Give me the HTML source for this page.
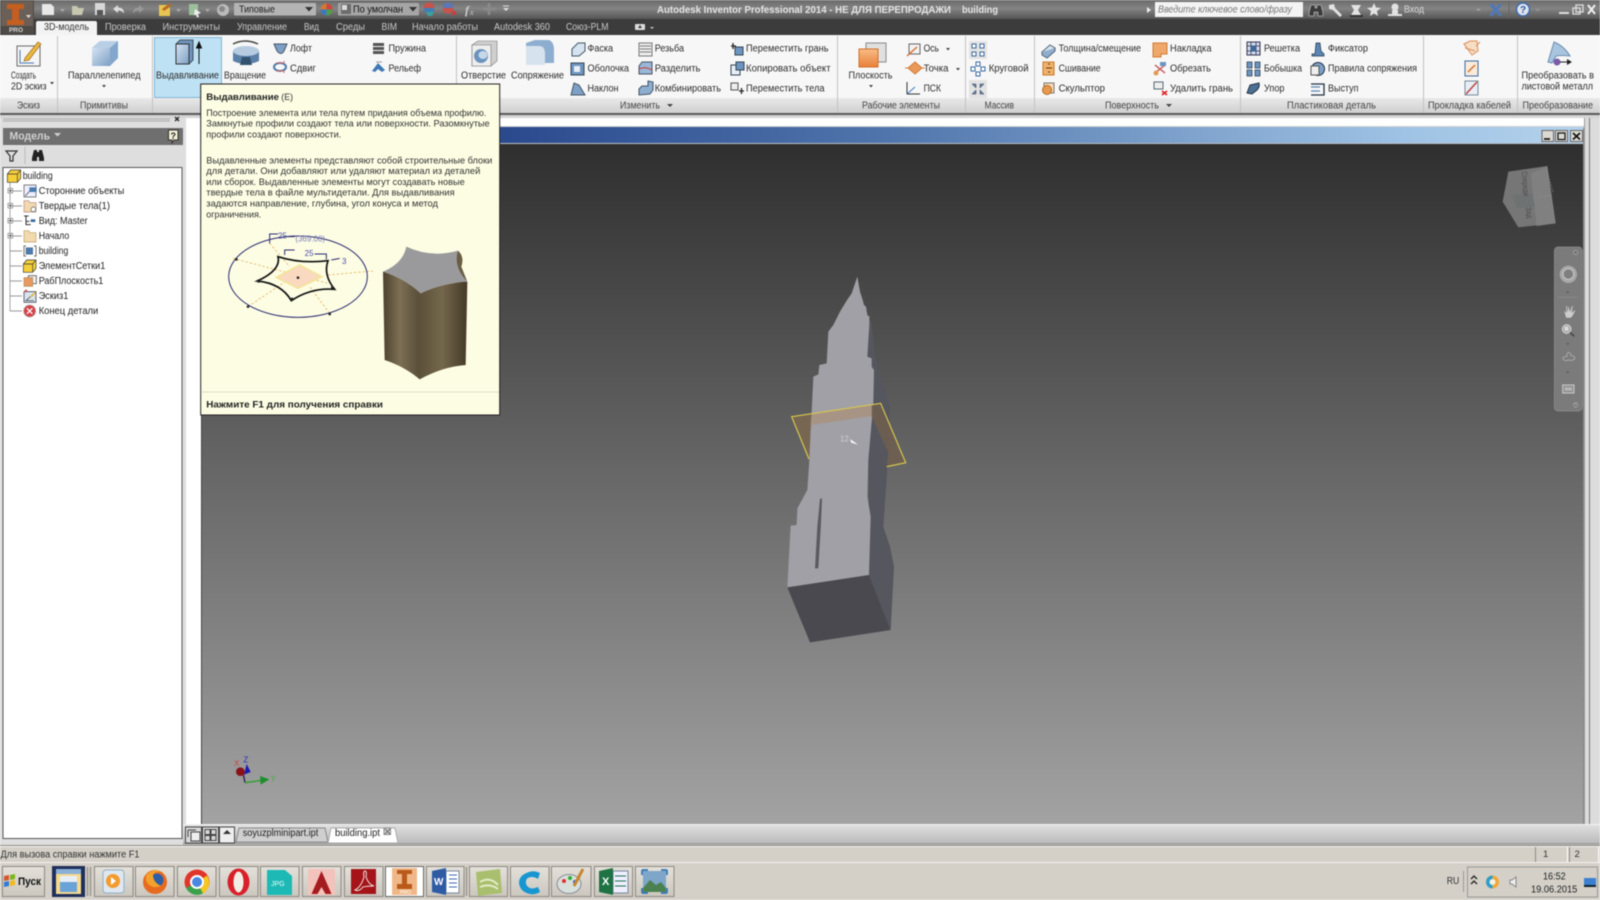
<!DOCTYPE html>
<html lang="ru"><head><meta charset="utf-8"><title>Autodesk Inventor</title>
<style>
html,body{margin:0;padding:0;background:#fff;width:1600px;height:900px;overflow:hidden}
svg{display:block;filter:blur(.4px);font-family:"Liberation Sans","Noto Sans CJK SC",sans-serif}
.r text{font-size:10px;fill:#2c2c2c}
.t text{font-size:10px;fill:#c8c8c8}
.l text{font-size:10px;fill:#444}
.tree text{font-size:10px;fill:#222}
.tip text{font-size:9.5px;fill:#333}
</style></head><body>
<svg width="1600" height="900" viewBox="0 0 1600 900" xmlns="http://www.w3.org/2000/svg">
<defs>
<linearGradient id="gT" x1="0" y1="0" x2="0" y2="1"><stop offset="0" stop-color="#6a6a6a"/><stop offset=".45" stop-color="#848484"/><stop offset="1" stop-color="#555"/></linearGradient>
<linearGradient id="gL" x1="0" y1="0" x2="0" y2="1"><stop offset="0" stop-color="#e9e9e9"/><stop offset="1" stop-color="#cfcfcf"/></linearGradient>
<linearGradient id="gV" x1="0" y1="0" x2="0" y2="1"><stop offset="0" stop-color="#2f2f2f"/><stop offset="1" stop-color="#a3a3a3"/></linearGradient>
<linearGradient id="gB" x1="0" y1="0" x2="1" y2="0"><stop offset="0" stop-color="#24408a"/><stop offset=".22" stop-color="#2b4a8e"/><stop offset=".49" stop-color="#4f74ab"/><stop offset=".87" stop-color="#9fc3e4"/><stop offset="1" stop-color="#b4d2ec"/></linearGradient>
<linearGradient id="gBar" x1="0" y1="0" x2="0" y2="1"><stop offset="0" stop-color="#e2e2e2"/><stop offset="1" stop-color="#b8b8b8"/></linearGradient>
<linearGradient id="gBox" x1="0" y1="0" x2="1" y2="1"><stop offset="0" stop-color="#d5e3f2"/><stop offset="1" stop-color="#7e9fc5"/></linearGradient>
<linearGradient id="gBr" x1="0" y1="0" x2="1" y2="0"><stop offset="0" stop-color="#4c422e"/><stop offset=".2" stop-color="#7d6f54"/><stop offset=".42" stop-color="#5a4f39"/><stop offset=".7" stop-color="#74674c"/><stop offset="1" stop-color="#443a28"/></linearGradient>
<linearGradient id="gOr" x1="0" y1="0" x2="0" y2="1"><stop offset="0" stop-color="#f8bd85"/><stop offset="1" stop-color="#e8803a"/></linearGradient>
<linearGradient id="gBtn" x1="0" y1="0" x2="0" y2="1"><stop offset="0" stop-color="#e4e1da"/><stop offset="1" stop-color="#cbc7bf"/></linearGradient>
</defs>

<!-- base -->
<rect width="1600" height="900" fill="#fff"/>
<!-- title -->
<rect width="1600" height="19" fill="url(#gT)"/>
<rect y="19" width="1600" height="16" fill="#3c3c3c"/>
<!-- app button -->
<rect width="34" height="34" fill="#4e4a46"/>
<rect x="1" y="1" width="32" height="25" fill="#6a6058"/>
<path d="M7 4h17v5h-5v11h5v5H7v-5h5V9H7z" fill="#c55f1f"/>
<path d="M26 15l5 0-2.500 3z" fill="#ddd"/>
<text x="9" y="32" font-size="6.500" font-weight="bold" fill="#d8d8d8" textLength="14" lengthAdjust="spacingAndGlyphs">PRO</text>
<!-- quick access -->
<g fill="#d5d5d5">
<path d="M42 4h9l3 3v8H42z" fill="#e8e8e8"/>
<path d="M60 9h5l-2.500 3z" fill="#aaa"/>
<path d="M72 6h5l1 2h6l-2 7H72z" fill="#c7c7b0"/>
<rect x="95" y="3" width="10" height="12" fill="#d8d8d8"/><rect x="97" y="10" width="6" height="5" fill="#555"/>
<path d="M113 9l5-4v2.500c4 0 6 2 6 6-1.500-2-3-3-6-3V13z" fill="#ddd"/>
<path d="M144 9l-5-4v2.500c-4 0-6 2-6 6 1.500-2 3-3 6-3V13z" fill="#999"/>
<path d="M159 5h9l2 3v8h-11z" fill="#e8c552"/><path d="M162 9l8-6 1 3-7 5z" fill="#b76a25"/>
<path d="M176 9h5l-2.500 3z" fill="#aaa"/>
<rect x="189" y="4" width="9" height="11" fill="#9cc09c"/><path d="M195 9l6 4-3 1 1 3-2 .5-1-3-2 1z" fill="#eee"/>
<path d="M205 9h5l-2.500 3z" fill="#aaa"/>
<circle cx="223" cy="10" r="6" fill="#bbb"/><circle cx="222" cy="9" r="3" fill="#888"/>
</g>
<rect x="234" y="3" width="82" height="12.500" rx="1" fill="#b4b4b4"/>
<text x="239" y="12.500" font-size="10" fill="#222" textLength="36" lengthAdjust="spacingAndGlyphs">Типовые</text>
<path d="M305 7h8l-4 4.500z" fill="#333"/>
<circle cx="326.500" cy="9.500" r="6" fill="#d07a34"/><path d="M326.500 3.500a6 6 0 0 1 6 6h-6z" fill="#c44"/><path d="M326.500 9.500h6a6 6 0 0 1-6 6z" fill="#4aa04a"/><path d="M326.500 9.500v6a6 6 0 0 1-6-6z" fill="#3c78c0"/>
<rect x="338" y="3" width="81" height="12.500" rx="1" fill="#a6a6a6"/>
<rect x="341" y="4" width="10" height="10" fill="#6b6b6b"/><rect x="342" y="5" width="5" height="5" fill="#ddd"/>
<text x="353" y="12.500" font-size="10" fill="#111" textLength="50" lengthAdjust="spacingAndGlyphs">По умолчан</text>
<path d="M409 7h8l-4 4.500z" fill="#333"/>
<circle cx="429" cy="8" r="5.500" fill="#c9534a"/><path d="M423.500 8h11a5.500 5.500 0 0 1-11 0z" fill="#3f7fb8"/><path d="M426 12h8l-2 4h-4z" fill="#3ca0a0"/>
<circle cx="448" cy="8" r="5.500" fill="#5b78b8"/><path d="M442.500 8h11a5.500 5.500 0 0 1-11 0z" fill="#c9534a"/><path d="M452 11l4 4m0-4l-4 4" stroke="#d33" stroke-width="1.500"/>
<text x="465" y="14" font-family="Liberation Serif" font-style="italic" font-weight="bold" font-size="12" fill="#ccc">f</text><text x="470" y="15" font-family="Liberation Serif" font-style="italic" font-size="8" fill="#ccc">x</text>
<path d="M489 3v12M483 9h13" stroke="#8a8a8a" stroke-width="2.500" fill="none"/>
<path d="M503 6h6" fill="none" stroke="#ddd"/><path d="M503 8h6l-3 3z" fill="#ddd"/>

<text x="657" y="13" font-size="10.500" font-weight="bold" fill="#e4e4e4" textLength="294" lengthAdjust="spacingAndGlyphs">Autodesk Inventor Professional 2014 - НЕ ДЛЯ ПЕРЕПРОДАЖИ</text>
<text x="962" y="13" font-size="10.500" font-weight="bold" fill="#e4e4e4" textLength="36" lengthAdjust="spacingAndGlyphs">building</text>

<!-- search & right -->
<path d="M1147 7l4 3-4 3z" fill="#eee"/>
<rect x="1155" y="2" width="148" height="15" fill="#f4f4f4"/>
<text x="1158" y="12.500" font-size="10" font-style="italic" fill="#777" textLength="134" lengthAdjust="spacingAndGlyphs">Введите ключевое слово/фразу</text>
<g fill="#e2e2e2">
<path d="M1311 5h4v3h2V5h4l2 8v3h-5v-4h-4v4h-5v-3z" fill="#3a3a3a" stroke="#ddd" stroke-width=".5"/>
<path d="M1329 5l5-1 1 4 7 7-2 2-7-7-4-1z"/>
<path d="M1351 5h10l-3 5 3 5h-10l3-5z"/><path d="M1350 15h13v2h-13z" fill="#333"/>
<path d="M1374 3l2 4.500 5 .5-4 3 1 5-4-2.500-4 2.500 1-5-4-3 5-.5z"/>
<circle cx="1395" cy="7" r="3.500"/><path d="M1392 10h6v4h4v2h-14v-2h4z"/>
</g>
<text x="1404" y="12.500" font-size="10" fill="#d8d8d8" textLength="20" lengthAdjust="spacingAndGlyphs">Вход</text>
<path d="M1476 9h5l-2.500 2z" fill="#aaa"/>
<path d="M1489 4l4 0 3 4 3-4 3.500 0-4.500 6 4.500 6-3.500 0-3-4-3 4-4 0 4.500-6z" fill="#4f78b8"/>
<path d="M1509 1v17" stroke="#666"/>
<circle cx="1523" cy="9.500" r="6.500" fill="#dfe4ec" stroke="#3b6ab0" stroke-width="1.500"/><text x="1520" y="13" font-size="10" font-weight="bold" fill="#2b5aa0">?</text>
<path d="M1535 9h5l-2.500 2z" fill="#999"/>
<rect x="1559" y="12" width="10" height="2" fill="#ddd"/>
<path d="M1576 5h7v7h-7zM1573 8h7v6h-7z" fill="none" stroke="#ddd" stroke-width="1.300"/>
<path d="M1588 5l7 9m0-9l-7 9" stroke="#eee" stroke-width="2"/>

<!-- tabs -->
<path d="M36 35V23q0-2 2-2h57q2 0 2 2v12z" fill="#f3f3f3"/>
<g class="t">
<text x="44" y="30" style="fill:#333" textLength="45" lengthAdjust="spacingAndGlyphs">3D-модель</text>
<text x="105" y="30" textLength="41" lengthAdjust="spacingAndGlyphs">Проверка</text>
<text x="162.500" y="30" textLength="57.500" lengthAdjust="spacingAndGlyphs">Инструменты</text>
<text x="237" y="30" textLength="50" lengthAdjust="spacingAndGlyphs">Управление</text>
<text x="304" y="30" textLength="15" lengthAdjust="spacingAndGlyphs">Вид</text>
<text x="336" y="30" textLength="29" lengthAdjust="spacingAndGlyphs">Среды</text>
<text x="381.500" y="30" textLength="15.500" lengthAdjust="spacingAndGlyphs">BIM</text>
<text x="412" y="30" textLength="66" lengthAdjust="spacingAndGlyphs">Начало работы</text>
<text x="494" y="30" textLength="56" lengthAdjust="spacingAndGlyphs">Autodesk 360</text>
<text x="566" y="30" textLength="42.500" lengthAdjust="spacingAndGlyphs">Союз-PLM</text>
</g>
<rect x="635" y="24" width="10" height="6" rx="1" fill="#ddd"/><path d="M638 28l2-3 2 3z" fill="#333"/><path d="M650 27h4l-2 2z" fill="#ccc"/>

<!-- ribbon -->
<rect y="35" width="1600" height="63" fill="#f7f7f7"/>
<rect y="98" width="1600" height="15" fill="url(#gL)"/>
<rect y="113" width="1600" height="2" fill="#5a5a5a"/>
<rect y="115" width="1600" height="3" fill="#d4d4d4"/>
<g stroke="#c2c2c2">
<path d="M57.500 36v77M152.500 36v77M456.500 36v62M837.500 36v77M965.500 36v77M1034.500 36v77M1240.500 36v77M1423.500 36v77M1517.500 36v77"/>
</g>
<rect x="154.500" y="37.500" width="67" height="60" fill="#bfe1f4" stroke="#7fb5d6"/>

<!-- large icons -->
<path d="M17 46h23v20H17z" fill="#f5f5f5" stroke="#6a6a6a"/><path d="M20 50v13h14" stroke="#4a7ab0" fill="none"/><path d="M25 58l13-16 3 2-12 16-5 1z" fill="#e8b93f" stroke="#a06a20" stroke-width=".7"/>
<path d="M92 48l8-7h18v17l-8 8H92z" fill="#83a6cc"/><path d="M92 48h18v18H92z" fill="url(#gBox)"/><path d="M92 48l8-7h18l-8 7z" fill="#b8cfe6"/>
<path d="M176 44l4-4h13v20l-4 4z" fill="#6e94bd" stroke="#333" stroke-width=".8"/><path d="M176 44h13v20h-13z" fill="url(#gBox)" stroke="#333"/><path d="M199 64V44M196.500 48l2.500-6 2.500 6z" stroke="#111" fill="#111"/>
<path d="M233 44q12-6 25 0" stroke="#444" fill="none" stroke-width="1.500"/><path d="M233 51q12-7 26 0v10q-13 6-26 0z" fill="#5a7fa8"/><ellipse cx="246" cy="51" rx="13" ry="5" fill="#b7cbe0"/><path d="M240 65l2-8h8l2 8z" fill="#33526f"/>
<path d="M472 45l6-4h19v20l-6 5h-19z" fill="#cfcfcf" stroke="#777" stroke-width=".6"/><path d="M472 45h19v21h-19z" fill="#eee" stroke="#777" stroke-width=".6"/><ellipse cx="481" cy="56" rx="7" ry="7" fill="#6b93be"/><ellipse cx="483" cy="55" rx="4.500" ry="4" fill="#c5d8ea"/>
<path d="M526 43l9-3h14q5 2 5 10v13h-28z" fill="#8eaed0"/><path d="M526 46h13q6 0 6 8v11h-19z" fill="#d7e2ef"/>
<rect x="866" y="43" width="20" height="19" fill="#e0e0e0" stroke="#888"/><rect x="859" y="49" width="19" height="18" fill="url(#gOr)" stroke="#d1702d"/>
<path d="M1548 62l6-20q10 4 16 14-9-1-14 0l-4 7z" fill="#a9c4df" stroke="#6a8db0"/><circle cx="1557" cy="62" r="3.500" fill="#7d5aa8"/><path d="M1560 62h10M1567 59.500l4 2.500-4 2.500" stroke="#222" fill="#222"/>

<!-- small icons col 1 -->
<path d="M274 44h13l-3 7q-3 5-7 0z" fill="#7ea0c6" stroke="#456"/>
<ellipse cx="280" cy="67" rx="6" ry="4" fill="none" stroke="#4d7aa8" stroke-width="2"/><path d="M276 63h8v-2M276 71h8v2" stroke="#c66" fill="none"/>
<path d="M373 43h11v3h-11zM373 47h11v3h-11zM373 51h11v3h-11z" fill="#555"/>
<path d="M372 71l6-8 7 7-3 2-4-3-3 3z" fill="#3e78b5"/><path d="M376 62h6" stroke="#999"/>
<!-- modify -->
<path d="M572 49l6-6h7v8l-6 5h-7z" fill="#d6e3f0" stroke="#456"/>
<rect x="571" y="63" width="13" height="12" fill="#6d95c0" stroke="#345"/><rect x="574" y="66" width="6" height="6" fill="#e7eef6"/>
<path d="M571 95l3-12 5 2 6 10z" fill="#7ea0c6" stroke="#456"/>
<path d="M639 43h13v13h-13z" fill="#eee" stroke="#777"/><path d="M640 46h11M640 49h11M640 52h11" stroke="#777"/>
<path d="M639 66l3-4h10v12h-13z" fill="#9ab7d6" stroke="#456"/><path d="M639 69q6-3 13 1" stroke="#c33" fill="none"/>
<path d="M639 95v-6l3-3h6v-5l5 1v8l-3 4z" fill="#8eaed0" stroke="#456"/>
<path d="M731 46l5 0M733 43v6" stroke="#222" stroke-width="1.300"/><rect x="735" y="47" width="8" height="8" fill="#6d95c0" stroke="#345"/>
<path d="M731 65h9v10h-9z" fill="#e7eef6" stroke="#345"/><rect x="736" y="62" width="8" height="8" fill="#6d95c0" stroke="#345"/>
<rect x="731" y="83" width="7" height="7" fill="#eee" stroke="#555"/><path d="M739 91h5M741.500 88v6" stroke="#222" stroke-width="1.300"/>
<!-- work -->
<path d="M909 44h11v10h-11z" fill="#f3f3f3" stroke="#666"/><path d="M907 56l10-9" stroke="#d8702e" stroke-width="1.500"/>
<path d="M915 62l7 6-7 6-7-6z" fill="#e99a5a" stroke="#d17b35"/><path d="M905 68h4M921 68h4" stroke="#d17b35"/>
<path d="M907 82v12h13" stroke="#333" fill="none"/><path d="M907 94l8-7" stroke="#3c78c0"/>
<path d="M946 48h4l-2 2.500zM956 68h4l-2 2.500z" fill="#444"/>
<!-- pattern -->
<rect x="969" y="41" width="18" height="18" fill="#e3e3e3"/><rect x="969" y="80" width="18" height="18" fill="#e3e3e3"/>
<g fill="#fff" stroke="#3a6aa0"><rect x="972" y="44" width="4" height="4"/><rect x="980" y="44" width="4" height="4"/><rect x="972" y="52" width="4" height="4"/><rect x="980" y="52" width="4" height="4"/>
<rect x="976" y="62" width="4" height="4"/><rect x="971" y="67" width="4" height="4"/><rect x="981" y="67" width="4" height="4"/><rect x="976" y="72" width="4" height="4"/></g>
<path d="M972 84l4 4v-4zM984 84l-4 4v-4zM972 94l4-4v4zM984 94l-4-4v4z" fill="#5c7fa8" stroke="#345" stroke-width=".5"/>
<!-- surface -->
<path d="M1042 52l8-7 5 3-8 7z" fill="#d8e4f0" stroke="#567"/><path d="M1042 52v3l5 3 8-7v-3" fill="#8eaed0" stroke="#567"/>
<rect x="1043" y="62" width="11" height="13" fill="#f0b26b" stroke="#c47a2c"/><path d="M1048 64h2M1046 68h6M1048 72h2" stroke="#5a3a14"/>
<rect x="1044" y="83" width="10" height="10" fill="#f6d8b4" stroke="#777"/><circle cx="1047" cy="90" r="4.500" fill="#e69a50" stroke="#b76a25"/>
<path d="M1153 43h14v11h-6v3h-8z" fill="#f0a86a" stroke="#d17b35"/>
<path d="M1155 65l10 8m-10 0l10-8" stroke="#c66" stroke-width="1.500"/><circle cx="1156" cy="73" r="2.500" fill="#e69a50"/><path d="M1160 62h6v4h-6z" fill="#6d95c0"/>
<rect x="1154" y="82" width="9" height="7" fill="#eee" stroke="#567"/><path d="M1162 91l5 4m0-4l-5 4" stroke="#d22" stroke-width="1.700"/>
<!-- plastic -->
<rect x="1247" y="42" width="13" height="13" fill="#cfdaea" stroke="#335"/><path d="M1251 42v13M1256 42v13M1247 46h13M1247 51h13" stroke="#335" stroke-width=".8"/><rect x="1251" y="46" width="5" height="5" fill="#3a6aa0"/>
<g fill="#6d95c0" stroke="#234" stroke-width=".7"><rect x="1247" y="62" width="5" height="6"/><rect x="1255" y="62" width="5" height="6"/><rect x="1247" y="70" width="5" height="6"/><rect x="1255" y="70" width="5" height="6"/></g>
<path d="M1247 93l3-8 9-2q1 4-2 7l-5 4z" fill="#4e6f94" stroke="#234"/>
<path d="M1316 43h4l1 8 3 3v2h-12v-2h3z" fill="#5a86b5" stroke="#234" stroke-width=".7"/>
<circle cx="1318" cy="69" r="6.500" fill="#7ea0c6" stroke="#234"/><rect x="1311" y="66" width="8" height="9" fill="#eee" stroke="#555"/>
<path d="M1311 84h13v11h-13" fill="none" stroke="#234" stroke-width="1.300"/><path d="M1311 87h9M1311 91h9" stroke="#5a86b5" stroke-width="1.300"/>
<!-- cable -->
<path d="M1464 44l6-3h7l1 10-6 4zM1465 48l10 3M1480 42l-4 4" fill="#f7ddc6" stroke="#d8905a"/>
<rect x="1465" y="61" width="13" height="15" fill="#fbeadb" stroke="#3a6aa0"/><path d="M1468 72l7-7" stroke="#d8702e" stroke-width="1.500"/>
<rect x="1465" y="81" width="13" height="14" fill="#e8eef5" stroke="#7a8a9a"/><path d="M1466 94l11-12" stroke="#b44" stroke-width="1.500"/>

<!-- ribbon labels -->
<g class="r">
<text x="11" y="78.500" textLength="25" lengthAdjust="spacingAndGlyphs">Создать</text>
<text x="11" y="89.500" textLength="35.500" lengthAdjust="spacingAndGlyphs">2D эскиз</text>
<text x="68" y="78.500" textLength="72.500" lengthAdjust="spacingAndGlyphs">Параллелепипед</text>
<text x="156" y="78.500" textLength="63" lengthAdjust="spacingAndGlyphs">Выдавливание</text>
<text x="224" y="78.500" textLength="42" lengthAdjust="spacingAndGlyphs">Вращение</text>
<text x="290" y="51.500" textLength="22" lengthAdjust="spacingAndGlyphs">Лофт</text>
<text x="290" y="71.500" textLength="26" lengthAdjust="spacingAndGlyphs">Сдвиг</text>
<text x="388.500" y="51.500" textLength="37.500" lengthAdjust="spacingAndGlyphs">Пружина</text>
<text x="388.500" y="71.500" textLength="32.500" lengthAdjust="spacingAndGlyphs">Рельеф</text>
<text x="461" y="78.500" textLength="45" lengthAdjust="spacingAndGlyphs">Отверстие</text>
<text x="511" y="78.500" textLength="53" lengthAdjust="spacingAndGlyphs">Сопряжение</text>
<text x="587.500" y="51.500" textLength="25.500" lengthAdjust="spacingAndGlyphs">Фаска</text>
<text x="587.500" y="71.500" textLength="41.500" lengthAdjust="spacingAndGlyphs">Оболочка</text>
<text x="587.500" y="91.500" textLength="31" lengthAdjust="spacingAndGlyphs">Наклон</text>
<text x="654.700" y="51.500" textLength="29.300" lengthAdjust="spacingAndGlyphs">Резьба</text>
<text x="654.700" y="71.500" textLength="45.800" lengthAdjust="spacingAndGlyphs">Разделить</text>
<text x="654.700" y="91.500" textLength="66.300" lengthAdjust="spacingAndGlyphs">Комбинировать</text>
<text x="746" y="51.500" textLength="82.500" lengthAdjust="spacingAndGlyphs">Переместить грань</text>
<text x="746" y="71.500" textLength="84.600" lengthAdjust="spacingAndGlyphs">Копировать объект</text>
<text x="746" y="91.500" textLength="78.500" lengthAdjust="spacingAndGlyphs">Переместить тела</text>
<text x="848.500" y="78.500" textLength="44" lengthAdjust="spacingAndGlyphs">Плоскость</text>
<text x="923.600" y="51.500" textLength="15.400" lengthAdjust="spacingAndGlyphs">Ось</text>
<text x="923.600" y="71.500" textLength="24.800" lengthAdjust="spacingAndGlyphs">Точка</text>
<text x="923.600" y="91.500" textLength="17.400" lengthAdjust="spacingAndGlyphs">ПСК</text>
<text x="988.700" y="71.500" textLength="39.900" lengthAdjust="spacingAndGlyphs">Круговой</text>
<text x="1058.600" y="51.500" textLength="82.400" lengthAdjust="spacingAndGlyphs">Толщина/смещение</text>
<text x="1058.600" y="71.500" textLength="42" lengthAdjust="spacingAndGlyphs">Сшивание</text>
<text x="1058.600" y="91.500" textLength="46.400" lengthAdjust="spacingAndGlyphs">Скульптор</text>
<text x="1170" y="51.500" textLength="41.500" lengthAdjust="spacingAndGlyphs">Накладка</text>
<text x="1170" y="71.500" textLength="41" lengthAdjust="spacingAndGlyphs">Обрезать</text>
<text x="1170" y="91.500" textLength="63" lengthAdjust="spacingAndGlyphs">Удалить грань</text>
<text x="1264" y="51.500" textLength="36" lengthAdjust="spacingAndGlyphs">Решетка</text>
<text x="1264" y="71.500" textLength="38" lengthAdjust="spacingAndGlyphs">Бобышка</text>
<text x="1264" y="91.500" textLength="20.500" lengthAdjust="spacingAndGlyphs">Упор</text>
<text x="1328" y="51.500" textLength="40" lengthAdjust="spacingAndGlyphs">Фиксатор</text>
<text x="1328" y="71.500" textLength="89" lengthAdjust="spacingAndGlyphs">Правила сопряжения</text>
<text x="1328" y="91.500" textLength="30.500" lengthAdjust="spacingAndGlyphs">Выступ</text>
<text x="1521.500" y="78.500" textLength="72.500" lengthAdjust="spacingAndGlyphs">Преобразовать в</text>
<text x="1521.500" y="89.500" textLength="71.500" lengthAdjust="spacingAndGlyphs">листовой металл</text>
</g>
<path d="M50 82h4l-2 2.500zM102 85h4l-2 2.500zM869 85h4l-2 2.500z" fill="#444"/>
<g class="l">
<text x="17" y="108.500" textLength="23" lengthAdjust="spacingAndGlyphs">Эскиз</text>
<text x="80" y="108.500" textLength="48" lengthAdjust="spacingAndGlyphs">Примитивы</text>
<text x="620" y="108.500" textLength="40" lengthAdjust="spacingAndGlyphs">Изменить</text>
<text x="862" y="108.500" textLength="78" lengthAdjust="spacingAndGlyphs">Рабочие элементы</text>
<text x="984.600" y="108.500" textLength="29.400" lengthAdjust="spacingAndGlyphs">Массив</text>
<text x="1105" y="108.500" textLength="54" lengthAdjust="spacingAndGlyphs">Поверхность</text>
<text x="1287" y="108.500" textLength="89" lengthAdjust="spacingAndGlyphs">Пластиковая деталь</text>
<text x="1428" y="108.500" textLength="83" lengthAdjust="spacingAndGlyphs">Прокладка кабелей</text>
<text x="1522.500" y="108.500" textLength="70.500" lengthAdjust="spacingAndGlyphs">Преобразование</text>
</g>
<path d="M667 104h6l-3 3zM1166 104h6l-3 3z" fill="#444"/>

<!-- left panel -->
<rect y="118" width="186" height="727" fill="#dedede"/>
<path d="M3 119h167M3 121h167" stroke="#aaa"/><path d="M175 117l4 4m0-4l-4 4" stroke="#222" stroke-width="1.300"/>
<rect x="3" y="128" width="180" height="17" fill="#6f6f6f"/>
<text x="9.500" y="139.500" font-size="11" font-weight="bold" fill="#d0d0d0" textLength="40.500" lengthAdjust="spacingAndGlyphs">Модель</text>
<path d="M54 133h7l-3.500 3.500z" fill="#d0d0d0"/>
<path d="M168.500 130h9.500v10h-4l-2 3v-3h-3.500z" fill="#f2f2d8" stroke="#333"/><text x="170.500" y="139" font-size="9" font-weight="bold" fill="#222">?</text>
<path d="M6 151h11l-4 5v5h-3v-5z" fill="none" stroke="#333" stroke-width="1.200"/>
<path d="M25 147v17" stroke="#bbb"/>
<path d="M34 150h3v2h2v-2h3l2 8v3h-5v-4h-2v4h-5v-3z" fill="#222"/>
<rect x="3" y="167.500" width="179" height="671" fill="#fff" stroke="#555"/>
<g transform="translate(0,110) scale(.33333)">
<path d="M30 215V603" stroke="#777" stroke-width="2" fill="none"/>
<path d="M30 243H66M30 288H66M30 333H66M30 378H66M30 423H66M30 468H66M30 513H66M30 558H66M30 603H66" stroke="#777" stroke-width="2"/>
<g fill="#fff" stroke="#777" stroke-width="2"><rect x="24" y="235" width="14" height="14"/><rect x="24" y="280" width="14" height="14"/><rect x="24" y="325" width="14" height="14"/><rect x="24" y="370" width="14" height="14"/></g>
<path d="M26 242h10M31 237v10M26 287h10M31 282v10M26 332h10M31 327v10M26 377h10M31 372v10" stroke="#222" stroke-width="2"/>
<!-- icons -->
<path d="M22 192l10-12h30v25l-10 12H22z" fill="#f5cf3a" stroke="#333" stroke-width="2"/><path d="M22 192h30v25M52 192l10-12" fill="none" stroke="#333" stroke-width="2"/>
<rect x="72" y="225" width="36" height="36" fill="#eef" stroke="#444" stroke-width="2"/><rect x="88" y="232" width="22" height="14" fill="#4b7cb0"/><path d="M76 258l12-14" stroke="#333" stroke-width="2"/>
<path d="M72 272h14l4 6h18v28H72z" fill="#f2d9ae" stroke="#a88" stroke-width="2"/><circle cx="100" cy="298" r="7" fill="#fff" stroke="#555" stroke-width="2"/>
<path d="M72 318h14M78 318v26h14M78 334h10" stroke="#333" stroke-width="3" fill="none"/><rect x="92" y="328" width="14" height="8" fill="#3b6aa0"/>
<path d="M72 362h14l4 6h18v28H72z" fill="#f2d9ae" stroke="#b9a06a" stroke-width="2"/>
<path d="M78 408h-6v30h6M102 408h6v30h-6" fill="none" stroke="#333" stroke-width="2"/><rect x="78" y="413" width="20" height="20" fill="#4b7cb0" stroke="#246"/>
<path d="M70 462l10-12h28v25l-10 12H70z" fill="#f5cf3a" stroke="#333" stroke-width="2"/><path d="M70 462h28v25M98 462l10-12" fill="none" stroke="#333" stroke-width="2"/>
<rect x="85" y="497" width="24" height="24" fill="#eee" stroke="#333" stroke-width="2"/><rect x="72" y="503" width="26" height="26" fill="#e69a60" stroke="#a85" stroke-width="2"/>
<rect x="72" y="545" width="36" height="32" fill="#d8e4f0" stroke="#223" stroke-width="2"/><circle cx="78" cy="543" r="4" fill="#c55"/><path d="M76 572h26M78 572l24-22" stroke="#333" stroke-width="2"/><path d="M90 560l14-14 3 3-12 13z" fill="#e8b93f"/>
<circle cx="89" cy="603" r="18" fill="#d5434a" stroke="#aaa" stroke-width="2"/><path d="M81 595l16 16m0-16l-16 16" stroke="#fff" stroke-width="4"/>
</g>
<g class="tree">
<text x="22.700" y="179" textLength="30" lengthAdjust="spacingAndGlyphs">building</text>
<text x="38.700" y="194" textLength="85.600" lengthAdjust="spacingAndGlyphs">Сторонние объекты</text>
<text x="38.700" y="209" textLength="71.300" lengthAdjust="spacingAndGlyphs">Твердые тела(1)</text>
<text x="38.700" y="224" textLength="49" lengthAdjust="spacingAndGlyphs">Вид: Master</text>
<text x="38.700" y="239" textLength="30.600" lengthAdjust="spacingAndGlyphs">Начало</text>
<text x="38.700" y="254" textLength="29.600" lengthAdjust="spacingAndGlyphs">building</text>
<text x="38.700" y="269" textLength="66.600" lengthAdjust="spacingAndGlyphs">ЭлементСетки1</text>
<text x="38.700" y="284" textLength="64.600" lengthAdjust="spacingAndGlyphs">РабПлоскость1</text>
<text x="38.700" y="299" textLength="29.600" lengthAdjust="spacingAndGlyphs">Эскиз1</text>
<text x="38.700" y="314" textLength="59.600" lengthAdjust="spacingAndGlyphs">Конец детали</text>
</g>

<!-- MDI -->
<rect x="186" y="118" width="1414" height="707" fill="#fff"/>
<rect x="1585" y="118" width="15" height="707" fill="#dcdcdc"/>
<path d="M1584.500 118v707" stroke="#999"/><path d="M1589.500 118v707" stroke="#777"/>
<path d="M201 126.500h1383" stroke="#d0d0d0"/>
<rect x="201" y="127" width="1383" height="17" fill="url(#gB)"/>
<path d="M201 143.500h1383" stroke="#b8c0c8"/>
<rect x="201" y="144" width="1383" height="680" fill="url(#gV)"/>
<path d="M201.500 128v696" stroke="#444"/><path d="M1583.500 128v696" stroke="#888"/>
<g fill="#dcd9d2" stroke="#666"><rect x="1542" y="130.500" width="11.500" height="11"/><rect x="1555.500" y="130.500" width="12" height="11"/><rect x="1570.500" y="130.500" width="12" height="11"/></g>
<path d="M1544 139h6" stroke="#111" stroke-width="1.700"/><path d="M1558 133h7v6.500h-7z" fill="none" stroke="#111" stroke-width="1.200"/><path d="M1573 133l7 6.500m0-6.500l-7 6.500" stroke="#111" stroke-width="1.700"/>

<!-- tower -->
<g transform="translate(760,260) scale(.33333)">
<path d="M322 165L335 190 345 290 390 440 385 580 370 800 390 860 402 920 392 1110 327 945z" fill="#55565e"/>
<path d="M292 50L300 95 308 120 312 135 318 140 322 165 328 170 328 195 322 290 335 295 335 320 342 330 340 430 332 520 325 600 322 710 332 770 327 945 82 982 92 797 110 795 112 745 130 712 142 690 148 600 150 510 155 455 160 350 175 343 178 315 200 310 205 215 220 195 240 155 260 122 275 100z" fill="#a0a0a6"/>
<path d="M82 982L327 945 392 1110 150 1147z" fill="#49494f"/>
<path d="M180 716L186 716 183 790 175 925 165 925 172 800z" fill="#5a5a62"/>
<path d="M95 470L155 460 148 597z" fill="#7a6750" fill-opacity=".85"/>
<path d="M155 460L335 435 335 468 152 495z" fill="#a89484"/>
<path d="M335 435L362 430 437 608 380 620 385 578 335 470z" fill="#6e5f50" fill-opacity=".9"/>
<path d="M147 597L95 470 362 430 437 608 380 620" fill="none" stroke="#d8c84e" stroke-width="3.500"/>
<text x="240" y="545" font-size="24" fill="#cfcfd2">12</text>
<path d="M270 537l24 17-20-6z" fill="#fff"/>
</g>

<!-- view cube -->
<g transform="translate(1400,120) scale(.33333)">
<path d="M325 155L442 138 467 310 355 322 308 245z" fill="#767676"/>
<path d="M442 138L467 310 410 318 392 160z" fill="#808080"/>
<path d="M335 225l60-5 10 40-55 3z" fill="#6e7272"/>
<path d="M415 230l45-5M440 150l20 70" stroke="#8e8e8e" stroke-width="2" stroke-dasharray="5 4" fill="none"/>
<text transform="translate(365,155) rotate(85)" font-size="24" fill="#4e4e4e" textLength="74" lengthAdjust="spacingAndGlyphs">Спереди</text>
<text transform="translate(377,262) rotate(82)" font-size="24" fill="#4e4e4e" textLength="34" lengthAdjust="spacingAndGlyphs">Зад</text>
<!-- navbar -->
<rect x="463" y="381" width="84" height="492" rx="11" fill="#7b7b7b" stroke="#8e8e8e" stroke-width="2"/>
<circle cx="527" cy="397" r="8" fill="#999"/><path d="M523 393l8 8m0-8l-8 8" stroke="#555" stroke-width="2"/>
<circle cx="505" cy="463" r="26" fill="#a8a8a8"/><circle cx="505" cy="462" r="16" fill="#7f7f7f" stroke="#c8c8c8" stroke-width="3"/>
<path d="M497 515h12l-6 6z" fill="#5f5f5f"/>
<path d="M472 532h64" stroke="#909090" stroke-width="2"/>
<path d="M490 568l8 10v-20l4-2v18l4-20 4 20 6-18 3 2-3 20 8-8 2 3-8 15-6 6h-14z" fill="#ccc" stroke="#666"/>
<circle cx="500" cy="627" r="13" fill="#aaa" stroke="#d5d5d5" stroke-width="3"/><path d="M510 637l13 12" stroke="#4a4a4a" stroke-width="5"/><rect x="494" y="620" width="11" height="12" fill="#ddd"/>
<path d="M497 669h12l-6 6z" fill="#5f5f5f"/>
<path d="M505 697q-6 5-4 12-12 0-12 8 6 8 16 3 14 4 20-5-2-8-12-8 0-7-8-10z" fill="none" stroke="#a8a8a8" stroke-width="3"/>
<path d="M497 755h12l-6 6z" fill="#5f5f5f"/>
<rect x="488" y="795" width="34" height="24" fill="#909090" stroke="#ccc" stroke-width="3"/><rect x="494" y="802" width="22" height="10" fill="#b5b5b5"/>
<circle cx="527" cy="855" r="8" fill="#a8a8a8"/><path d="M521 853h12M521 858h12" stroke="#555" stroke-width="2"/>
</g>

<!-- triad -->
<g transform="translate(200,740) scale(.33333)">
<path d="M135 128l-5-25" stroke="#331a55" stroke-width="4"/>
<path d="M135 128L185 121" stroke="#2aa02a" stroke-width="4"/><path d="M180 108l28 10-26 16z" fill="#1c8f2a"/>
<path d="M140 72l12 24-20 8z" fill="#1a1ab0"/>
<circle cx="121" cy="95" r="13" fill="#8a1216"/>
<text x="102" y="78" font-size="24" fill="#c44">X</text><text x="130" y="68" font-size="24" fill="#2a2ad0">Z</text><text x="212" y="125" font-size="24" fill="#3ab04a">Y</text>
</g>

<!-- bottom tab bar -->
<rect x="183" y="824" width="1417" height="21" fill="url(#gBar)"/>
<path d="M183 824.500h1417" stroke="#f2f2f2"/><path d="M183 843.500h1417" stroke="#999"/>
<g fill="#d8d8d8" stroke="#444"><rect x="185.500" y="827" width="16" height="16"/><rect x="202.500" y="827" width="16" height="16"/><rect x="219.500" y="827" width="15" height="16" fill="#eee"/></g>
<rect x="191" y="832" width="9" height="9" fill="#eee" stroke="#444"/><path d="M188 830h8M188 830v7" stroke="#444"/>
<g fill="none" stroke="#444"><rect x="205" y="829.500" width="5" height="5"/><rect x="211" y="829.500" width="5" height="5"/><rect x="205" y="835.500" width="5" height="5"/><rect x="211" y="835.500" width="5" height="5"/></g>
<path d="M223 834l4-4 4 4z" fill="#333"/>
<path d="M236 842l3-14h86l3 14z" fill="#cfcfcf" stroke="#888"/>
<text x="242.700" y="836" font-size="10" fill="#222" textLength="75.600" lengthAdjust="spacingAndGlyphs">soyuzplminipart.ipt</text>
<path d="M328 843l3-15h64l3 15z" fill="#fff" stroke="#aaa"/>
<text x="335" y="836" font-size="10" fill="#222" textLength="45" lengthAdjust="spacingAndGlyphs">building.ipt</text>
<rect x="384" y="828" width="6.500" height="6.500" fill="#ddd" stroke="#888"/><path d="M385 829l5 5m0-5l-5 5" stroke="#666"/>

<!-- status -->
<rect y="845" width="1600" height="18" fill="#d4d0c8"/>
<path d="M0 845.500h1600" stroke="#8e8b84"/><path d="M0 846.500h1600" stroke="#f4f2ee"/><path d="M0 862.500h1600" stroke="#f4f2ee"/>
<text x="0.500" y="857.500" font-size="10" fill="#333" textLength="139" lengthAdjust="spacingAndGlyphs">Для вызова справки нажмите F1</text>
<path d="M1535.500 847v15M1569.500 847v15" stroke="#8e8b84"/><path d="M1567.500 847v15M1598.500 847v15" stroke="#fff"/>
<text x="1543" y="857" font-size="9.500" fill="#333">1</text><text x="1574.500" y="857" font-size="9.500" fill="#333">2</text>

<!-- taskbar -->
<rect y="863" width="1600" height="37" fill="#d4d0c8"/>
<g fill="url(#gBtn)" stroke="#8c8982">
<rect x="2.500" y="866.500" width="42" height="30"/>
<rect x="94.500" y="866.500" width="38.500" height="30"/><rect x="135.500" y="866.500" width="38.500" height="30"/><rect x="177.500" y="866.500" width="38.500" height="30"/><rect x="219.500" y="866.500" width="38.500" height="30"/><rect x="260.500" y="866.500" width="38.500" height="30"/><rect x="302.500" y="866.500" width="38.500" height="30"/><rect x="344.500" y="866.500" width="38.500" height="30"/><rect x="426.500" y="866.500" width="37.500" height="30"/><rect x="469.500" y="866.500" width="38" height="30"/><rect x="510.500" y="866.500" width="38.500" height="30"/><rect x="551.500" y="866.500" width="39.500" height="30"/><rect x="594.500" y="866.500" width="38" height="30"/><rect x="635.500" y="866.500" width="38.500" height="30"/>
</g>
<path d="M87.500 867v29M90.500 867v29M466.500 867v29" stroke="#9a978f" stroke-width="1.500"/>
<rect x="52" y="866" width="33" height="31" fill="#1f2f5a"/>
<rect x="385.500" y="866.500" width="38" height="30" fill="#fff" stroke="#666"/>
<!-- start -->
<path d="M4 876l5-1v5l-5 1z" fill="#d9542b"/><path d="M10 875l5-1v5l-5 1z" fill="#7ab51d"/><path d="M4 882l5-1v5l-5 1z" fill="#2f7bd6"/><path d="M10 881l5-1v5l-5 1z" fill="#f5b71a"/>
<text x="18" y="885" font-size="11" font-weight="bold" fill="#111" textLength="23" lengthAdjust="spacingAndGlyphs">Пуск</text>
<!-- folder -->
<rect x="56" y="869" width="25" height="25" fill="#f4d98f"/><rect x="56" y="869" width="25" height="5" fill="#8bb0d8"/><rect x="60" y="882" width="17" height="10" fill="#6aa3d6"/><rect x="60" y="876" width="17" height="6" fill="#e8eef5"/>
<!-- media -->
<rect x="103" y="870" width="21" height="23" rx="3" fill="#dfe7ef" stroke="#8fb0cc"/><circle cx="113" cy="881" r="7" fill="#f39b2d"/><path d="M111 877l5 4-5 4z" fill="#fff"/>
<!-- firefox -->
<circle cx="155" cy="882" r="12" fill="#e66a1f"/><circle cx="157" cy="880" r="6.500" fill="#2c5fa8"/><path d="M146 875q8-8 16-3-7-1-9 3 0 7 8 11-10 4-15-5z" fill="#f2a12b"/>
<!-- chrome -->
<circle cx="197" cy="882" r="12.500" fill="#e0352b"/><path d="M197 882l-11 6a12.500 12.500 0 0 0 17 5.500z" fill="#3aa14a"/><path d="M197 882l6 11.500a12.500 12.500 0 0 0 4-18z" fill="#f6c624"/><circle cx="197" cy="882" r="6" fill="#4a87e0" stroke="#fff" stroke-width="2"/>
<!-- opera -->
<ellipse cx="238.500" cy="882" rx="11" ry="13.500" fill="#d8202a"/><ellipse cx="238.500" cy="882" rx="5" ry="10.500" fill="#f2ede4"/>
<!-- jpg -->
<path d="M267 870h18l7 6v19h-25z" fill="#1db9b4"/><text x="271" y="886" font-size="7" fill="#e8ffff">JPG</text>
<!-- cad -->
<rect x="308" y="869" width="27" height="26" fill="#f3c3bb"/><path d="M321.500 871l10 23h-6l-4-7-4 7h-6z" fill="#a51c20"/>
<!-- acrobat -->
<rect x="351" y="869" width="25" height="25" fill="#a41418"/><path d="M355 890q6-3 9-13-1-6 1-6t1 6q3 8 8 9-7 0-11 1-4 5-8 3z" fill="none" stroke="#f0e0e0"/>
<!-- inventor -->
<rect x="392" y="868" width="25" height="27" fill="#f0b888"/><path d="M397 870h15v4h-5v10h5v5h-15v-5h5v-10h-5z" fill="#b95a1a"/>
<text x="400" y="894" font-size="5" fill="#fff">PRO</text>
<!-- word -->
<rect x="446" y="871" width="13" height="22" fill="#fff" stroke="#789"/><path d="M449 875h8M449 879h8M449 883h8M449 887h8" stroke="#3e6ab0"/><path d="M432 871l14-3v27l-14-3z" fill="#2f5ba5"/><text x="434" y="885" font-size="10" font-weight="bold" fill="#fff">W</text>
<!-- green -->
<path d="M476 872l24-3 2 24-24 3z" fill="#a9bf6e"/><path d="M480 882q10-6 18 3M480 887q10-4 18 2" stroke="#e3ecc5" stroke-width="2" fill="none"/>
<!-- c -->
<path d="M540 873q-6-3-11-1-10 3-10 11 1 9 11 11 5 1 10-2l-2-5q-9 4-12-3-1-7 6-7 3 0 6 2z" fill="#1896d1"/>
<!-- paint -->
<ellipse cx="569" cy="884" rx="12" ry="9.500" fill="#d8e0dc" stroke="#889"/><circle cx="564" cy="881" r="2" fill="#d33"/><circle cx="570" cy="878" r="2" fill="#3a3"/><circle cx="575" cy="882" r="2" fill="#36c"/><path d="M574 886l9-17" stroke="#c9862d" stroke-width="3"/>
<!-- excel -->
<rect x="613" y="871" width="15" height="22" fill="#eef" stroke="#789"/><path d="M615 876h11M615 881h11M615 886h11" stroke="#1f7244"/><path d="M599 871l14-3v27l-14-3z" fill="#1f7244"/><text x="602" y="885" font-size="11" font-weight="bold" fill="#fff">X</text>
<!-- photo -->
<rect x="643" y="871" width="23" height="21" fill="#7da6c9"/><path d="M643 888l7-8 6 5 5-3 5 6v4h-23z" fill="#4b8150"/><path d="M642 870h6M642 870v5M667 870h-6M667 870v5M642 893h6M642 893v-5M667 893h-6M667 893v-5" stroke="#2f74b5" stroke-width="1.700"/>

<!-- tray -->
<text x="1446.700" y="884" font-size="10.500" fill="#333" textLength="12.600" lengthAdjust="spacingAndGlyphs">RU</text>
<path d="M1463.500 871v21" stroke="#999"/>
<rect x="1467.500" y="867" width="130" height="30" fill="#d4d0c8" stroke="#999"/>
<path d="M1471 879l3-3 3 3M1471 884l3-3 3 3" fill="none" stroke="#222" stroke-width="1.300"/>
<circle cx="1492.500" cy="882" r="6.500" fill="#f0a838"/><path d="M1492.500 875.500a6.500 6.500 0 0 0 0 13z" fill="#2c9ecb"/><circle cx="1492.500" cy="882" r="3" fill="#f5f0e0"/>
<path d="M1510 880h2l4-3v10l-4-3h-2z" fill="#eee" stroke="#888"/>
<text x="1543" y="879.300" font-size="10" fill="#222" textLength="22.700" lengthAdjust="spacingAndGlyphs">16:52</text>
<text x="1531" y="892.300" font-size="10" fill="#222" textLength="46.300" lengthAdjust="spacingAndGlyphs">19.06.2015</text>
<rect x="1584" y="878" width="12" height="9" fill="#3d7fd0"/><rect x="1584" y="885" width="12" height="2" fill="#123"/>

<!-- tooltip -->
<rect x="200.700" y="84" width="299" height="331" fill="#fdfde4" stroke="#222"/>
<path d="M201 392h298" stroke="#dcdccc"/>
<g class="tip">
<text x="206.300" y="100" font-weight="bold" textLength="72.700" lengthAdjust="spacingAndGlyphs" style="fill:#222">Выдавливание</text>
<text x="281.300" y="100" textLength="11.700" lengthAdjust="spacingAndGlyphs">(E)</text>
<text x="206.300" y="116" textLength="280" lengthAdjust="spacingAndGlyphs">Построение элемента или тела путем придания объема профилю.</text>
<text x="206.300" y="126.700" textLength="283.400" lengthAdjust="spacingAndGlyphs">Замкнутые профили создают тела или поверхности. Разомкнутые</text>
<text x="206.300" y="137.700" textLength="135" lengthAdjust="spacingAndGlyphs">профили создают поверхности.</text>
<text x="206.300" y="163.300" textLength="286" lengthAdjust="spacingAndGlyphs">Выдавленные элементы представляют собой строительные блоки</text>
<text x="206.300" y="174" textLength="274" lengthAdjust="spacingAndGlyphs">для детали. Они добавляют или удаляют материал из деталей</text>
<text x="206.300" y="185" textLength="258.400" lengthAdjust="spacingAndGlyphs">или сборок. Выдавленные элементы могут создавать новые</text>
<text x="206.300" y="195.700" textLength="248.400" lengthAdjust="spacingAndGlyphs">твердые тела в файле мультидетали. Для выдавливания</text>
<text x="206.300" y="206.700" textLength="231.700" lengthAdjust="spacingAndGlyphs">задаются направление, глубина, угол конуса и метод</text>
<text x="206.300" y="217.300" textLength="55" lengthAdjust="spacingAndGlyphs">ограничения.</text>
<text x="206.300" y="407.700" font-weight="bold" textLength="176.700" lengthAdjust="spacingAndGlyphs" style="fill:#222">Нажмите F1 для получения справки</text>
</g>
<g transform="translate(198,80) scale(.33333)">
<path d="M105 535L390 610M150 680L270 600M395 700L335 620M390 585L525 573M215 490L275 560" stroke="#e0a040" stroke-width="2" stroke-dasharray="7 6" fill="none"/>
<ellipse cx="300" cy="590" rx="208" ry="122" fill="none" stroke="#2a2a70" stroke-width="3"/>
<path d="M235 592L305 555 372 590 300 625z" fill="#f9d9c0" stroke="#f4e59a" stroke-width="5"/>
<path d="M240 530Q250 570 178 603Q250 610 280 662Q340 622 410 628Q375 585 390 542Q310 552 240 530Z" fill="none" stroke="#111" stroke-width="5"/>
<path d="M215 490V462H240M265 470H290M260 525V510H290M350 522H385V538M400 540L425 535" stroke="#2a2a70" stroke-width="3" fill="none"/>
<circle cx="300" cy="593" r="4" fill="#222"/><circle cx="182" cy="603" r="5" fill="#222"/><circle cx="282" cy="658" r="5" fill="#222"/><circle cx="403" cy="622" r="4" fill="#222"/><circle cx="115" cy="538" r="4" fill="#222"/><circle cx="150" cy="680" r="4" fill="#222"/><circle cx="395" cy="702" r="4" fill="#222"/>
<text x="240" y="476" font-size="24" fill="#4a4aa8">25</text><text x="292" y="484" font-size="24" fill="#7a7ab8">(369.00)</text><text x="320" y="528" font-size="24" fill="#4a4aa8">25</text><text x="432" y="552" font-size="24" fill="#4a4aa8">3</text>
<path d="M780 512Q800 530 790 560L806 600V640H770V520z" fill="#6a5d44"/>
<path d="M555 575L560 840Q620 860 665 898Q735 860 803 855L808 605Q730 610 668 640Q620 595 555 575Z" fill="url(#gBr)"/>
<path d="M555 575Q615 550 625 500Q700 535 780 512Q765 560 808 605Q730 610 668 640Q620 595 555 575Z" fill="#9a9a9c"/>
</g>
</svg>
</body></html>
